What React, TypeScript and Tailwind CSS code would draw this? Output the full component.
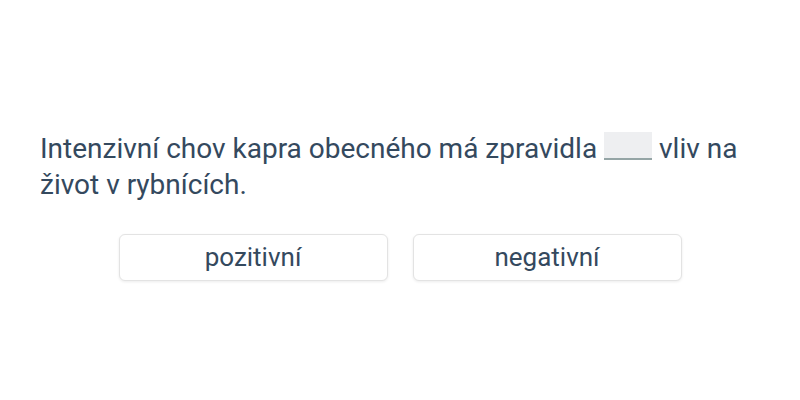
export default function App() {
  const options = ["pozitivní", "negativní"];

  return (
    <div
      className="flex h-[400px] w-full flex-col justify-center bg-white px-10 pt-[10px] text-[#34495e]"
      style={{ fontFamily: "Roboto, sans-serif" }}
    >
      <p className="text-[28px] leading-[36px]">
        Intenzivní chov kapra obecného má zpravidla{" "}
        <span className="inline-block h-[28px] w-[48px] translate-y-[2px] border-b-2 border-[#95a5a6] bg-[#eeeff1] align-baseline" />{" "}
        vliv na život v rybnících.
      </p>
      <div className="mt-[31px] flex justify-center gap-[25px]">
        {options.map((o) => (
          <button
            key={o}
            className="h-[47px] w-[269px] rounded-md border border-[#e3e3e3] bg-white text-[26px] text-[#34495e] shadow-[0_1px_3px_rgba(0,0,0,0.08)]"
          >
            {o}
          </button>
        ))}
      </div>
    </div>
  );
}
